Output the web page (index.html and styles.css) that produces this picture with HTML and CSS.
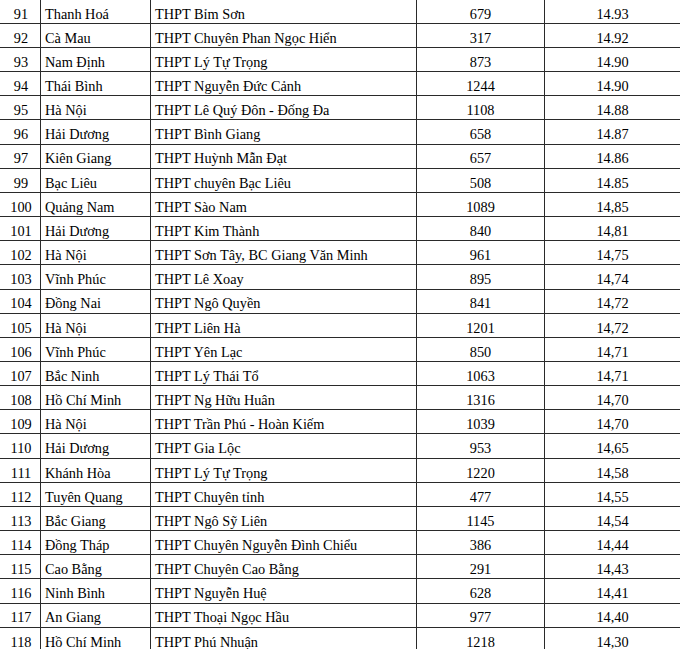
FILE: index.html
```html
<!DOCTYPE html>
<html lang="vi">
<head>
<meta charset="utf-8">
<title>Bảng xếp hạng</title>
<link rel="stylesheet" href="styles.css">
</head>
<body>
<div class="sheet">
  <div class="c rank">91</div><div class="c prov">Thanh Hoá</div><div class="c school">THPT Bỉm Sơn</div><div class="c num">679</div><div class="c num">14.93</div>
  <div class="c rank">92</div><div class="c prov">Cà Mau</div><div class="c school">THPT Chuyên Phan Ngọc Hiển</div><div class="c num">317</div><div class="c num">14.92</div>
  <div class="c rank">93</div><div class="c prov">Nam Định</div><div class="c school">THPT Lý Tự Trọng</div><div class="c num">873</div><div class="c num">14.90</div>
  <div class="c rank">94</div><div class="c prov">Thái Bình</div><div class="c school">THPT Nguyễn Đức Cảnh</div><div class="c num">1244</div><div class="c num">14.90</div>
  <div class="c rank">95</div><div class="c prov">Hà Nội</div><div class="c school">THPT Lê Quý Đôn - Đống Đa</div><div class="c num">1108</div><div class="c num">14.88</div>
  <div class="c rank">96</div><div class="c prov">Hải Dương</div><div class="c school">THPT Bình Giang</div><div class="c num">658</div><div class="c num">14.87</div>
  <div class="c rank">97</div><div class="c prov">Kiên Giang</div><div class="c school">THPT Huỳnh Mẫn Đạt</div><div class="c num">657</div><div class="c num">14.86</div>
  <div class="c rank">99</div><div class="c prov">Bạc Liêu</div><div class="c school">THPT chuyên Bạc Liêu</div><div class="c num">508</div><div class="c num">14.85</div>
  <div class="c rank">100</div><div class="c prov">Quảng Nam</div><div class="c school">THPT Sào Nam</div><div class="c num">1089</div><div class="c num">14,85</div>
  <div class="c rank">101</div><div class="c prov">Hải Dương</div><div class="c school">THPT Kim Thành</div><div class="c num">840</div><div class="c num">14,81</div>
  <div class="c rank">102</div><div class="c prov">Hà Nội</div><div class="c school">THPT Sơn Tây, BC Giang Văn Minh</div><div class="c num">961</div><div class="c num">14,75</div>
  <div class="c rank">103</div><div class="c prov">Vĩnh Phúc</div><div class="c school">THPT Lê Xoay</div><div class="c num">895</div><div class="c num">14,74</div>
  <div class="c rank">104</div><div class="c prov">Đồng Nai</div><div class="c school">THPT Ngô Quyền</div><div class="c num">841</div><div class="c num">14,72</div>
  <div class="c rank">105</div><div class="c prov">Hà Nội</div><div class="c school">THPT Liên Hà</div><div class="c num">1201</div><div class="c num">14,72</div>
  <div class="c rank">106</div><div class="c prov">Vĩnh Phúc</div><div class="c school">THPT Yên Lạc</div><div class="c num">850</div><div class="c num">14,71</div>
  <div class="c rank">107</div><div class="c prov">Bắc Ninh</div><div class="c school">THPT Lý Thái Tổ</div><div class="c num">1063</div><div class="c num">14,71</div>
  <div class="c rank">108</div><div class="c prov">Hồ Chí Minh</div><div class="c school">THPT Ng Hữu Huân</div><div class="c num">1316</div><div class="c num">14,70</div>
  <div class="c rank">109</div><div class="c prov">Hà Nội</div><div class="c school">THPT Trần Phú - Hoàn Kiếm</div><div class="c num">1039</div><div class="c num">14,70</div>
  <div class="c rank">110</div><div class="c prov">Hải Dương</div><div class="c school">THPT Gia Lộc</div><div class="c num">953</div><div class="c num">14,65</div>
  <div class="c rank">111</div><div class="c prov">Khánh Hòa</div><div class="c school">THPT Lý Tự Trọng</div><div class="c num">1220</div><div class="c num">14,58</div>
  <div class="c rank">112</div><div class="c prov">Tuyên Quang</div><div class="c school">THPT Chuyên tỉnh</div><div class="c num">477</div><div class="c num">14,55</div>
  <div class="c rank">113</div><div class="c prov">Bắc Giang</div><div class="c school">THPT Ngô Sỹ Liên</div><div class="c num">1145</div><div class="c num">14,54</div>
  <div class="c rank">114</div><div class="c prov">Đồng Tháp</div><div class="c school">THPT Chuyên Nguyễn Đình Chiểu</div><div class="c num">386</div><div class="c num">14,44</div>
  <div class="c rank">115</div><div class="c prov">Cao Bằng</div><div class="c school">THPT Chuyên Cao Bằng</div><div class="c num">291</div><div class="c num">14,43</div>
  <div class="c rank">116</div><div class="c prov">Ninh Bình</div><div class="c school">THPT Nguyễn Huệ</div><div class="c num">628</div><div class="c num">14,41</div>
  <div class="c rank">117</div><div class="c prov">An Giang</div><div class="c school">THPT Thoại Ngọc Hầu</div><div class="c num">977</div><div class="c num">14,40</div>
  <div class="c rank">118</div><div class="c prov">Hồ Chí Minh</div><div class="c school">THPT Phú Nhuận</div><div class="c num">1218</div><div class="c num">14,30</div>
</div>
</body>
</html>
```

FILE: styles.css
```css
html, body {
  margin: 0;
  padding: 0;
  background: #fff;
}

body {
  font-family: "Liberation Serif", "Times New Roman", serif;
  font-size: 14.3px;
  color: #000;
  overflow: hidden;
}

.sheet {
  display: grid;
  grid-template-columns: 40px 110px 266px 128px 136px;
  grid-auto-rows: 24.17px;
  margin-top: -0.37px;
}

.c {
  box-sizing: border-box;
  border-bottom: 1px solid #2a2a2a;
  padding-top: 4.9px;
  line-height: 18px;
  white-space: nowrap;
  overflow: visible;
}

.rank {
  text-align: center;
  padding-left: 2px;
}

.prov,
.school,
.num {
  border-left: 1px solid #2a2a2a;
}

.prov,
.school {
  padding-left: 4px;
}

.num {
  text-align: center;
}
```
